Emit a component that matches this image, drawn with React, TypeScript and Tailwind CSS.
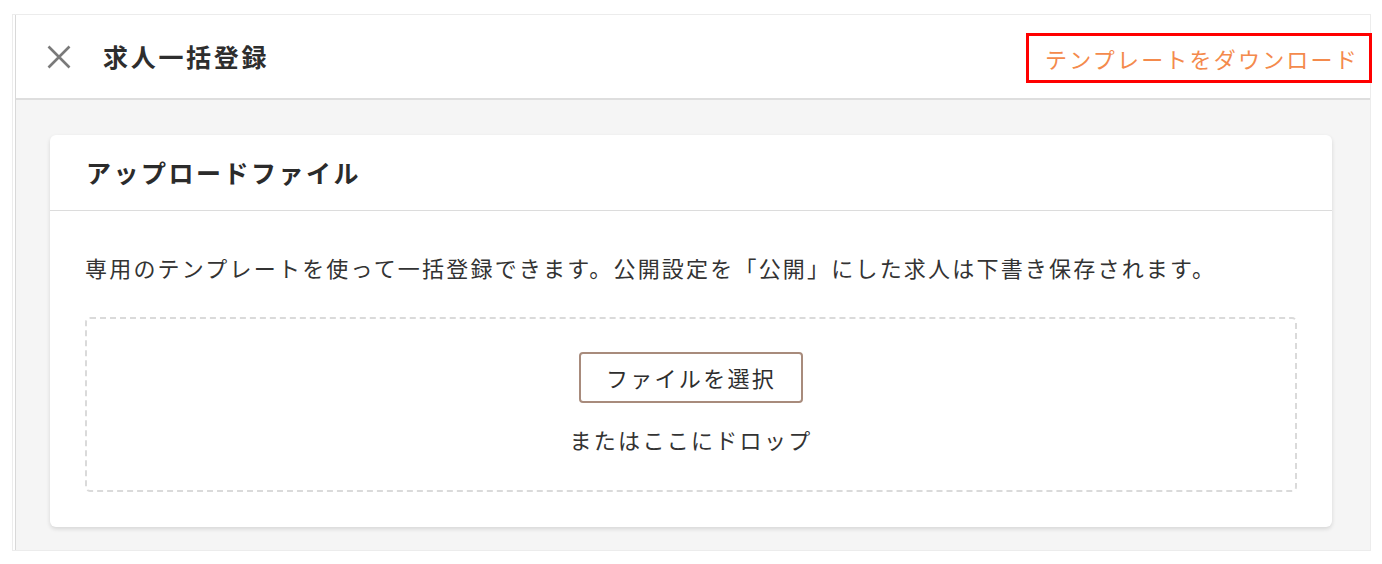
import React from "react";

const font = { fontFamily: '"Noto Sans CJK JP", "Noto Sans", sans-serif' };

export default function App() {
  return (
    <div className="w-[1382px] h-[564px] bg-white pt-[14px] pl-[12px]" style={font}>
      <div className="w-[1359px] h-[537px] border border-[#ececec] pl-[2px] flex flex-col">
        <div className="flex-1 border-l border-[#d9d9d9] flex flex-col">
          {/* Header */}
          <div className="h-[85px] bg-white flex items-center justify-between border-b-2 border-[#dedede]">
            <div className="flex items-center pl-[31px]">
              <svg width="24" height="24" viewBox="0 0 24 24" className="block">
                <path d="M1.5 1.5 L22.5 22.5 M22.5 1.5 L1.5 22.5" stroke="#7a7a7a" strokeWidth="2.6" fill="none" />
              </svg>
              <h1 className="ml-[32px] text-[25px] font-bold tracking-[2.7px] text-[#2e2e2e] leading-none">求人一括登録</h1>
            </div>
            <div className="mr-[-2px] mt-[3px] w-[346px] h-[50px] border-[3px] border-[#ff0000] flex items-center pl-[16px]">
              <span className="text-[22px] tracking-[2.2px] text-[#f48a4c] leading-none">テンプレートをダウンロード</span>
            </div>
          </div>
          {/* Body */}
          <div className="flex-1 bg-[#f5f5f5] pt-[35px] pl-[34px] pr-[38px]">
            <div className="bg-white rounded-[6px] shadow-[0_2px_4px_rgba(0,0,0,0.13)]">
              <div className="h-[76px] flex items-center px-[36px] border-b border-[#dcdcdc]">
                <h2 className="text-[25px] font-bold tracking-[2.5px] text-[#2b2b2b] leading-none">アップロードファイル</h2>
              </div>
              <div className="px-[35px] pt-[35px] pb-[35px]">
                <p className="text-[22px] leading-[42px] tracking-[2.2px] text-[#333]">
                  専用のテンプレートを使って一括登録できます。公開設定を「公開」にした求人は下書き保存されます。
                </p>
                <div className="mt-[29px] h-[175px] border-2 border-dashed border-[#dadada] rounded-[5px] flex flex-col items-center pt-[33px]">
                  <button className="w-[224px] h-[51px] border-2 border-[#a88b7c] rounded-[4px] bg-white flex items-center justify-center text-[22px] tracking-[2.3px] text-[#2e2e2e]">
                    ファイルを選択
                  </button>
                  <div className="mt-[20px] text-[22px] leading-[32px] tracking-[2.3px] text-[#333]">またはここにドロップ</div>
                </div>
              </div>
            </div>
          </div>
        </div>
      </div>
    </div>
  );
}
